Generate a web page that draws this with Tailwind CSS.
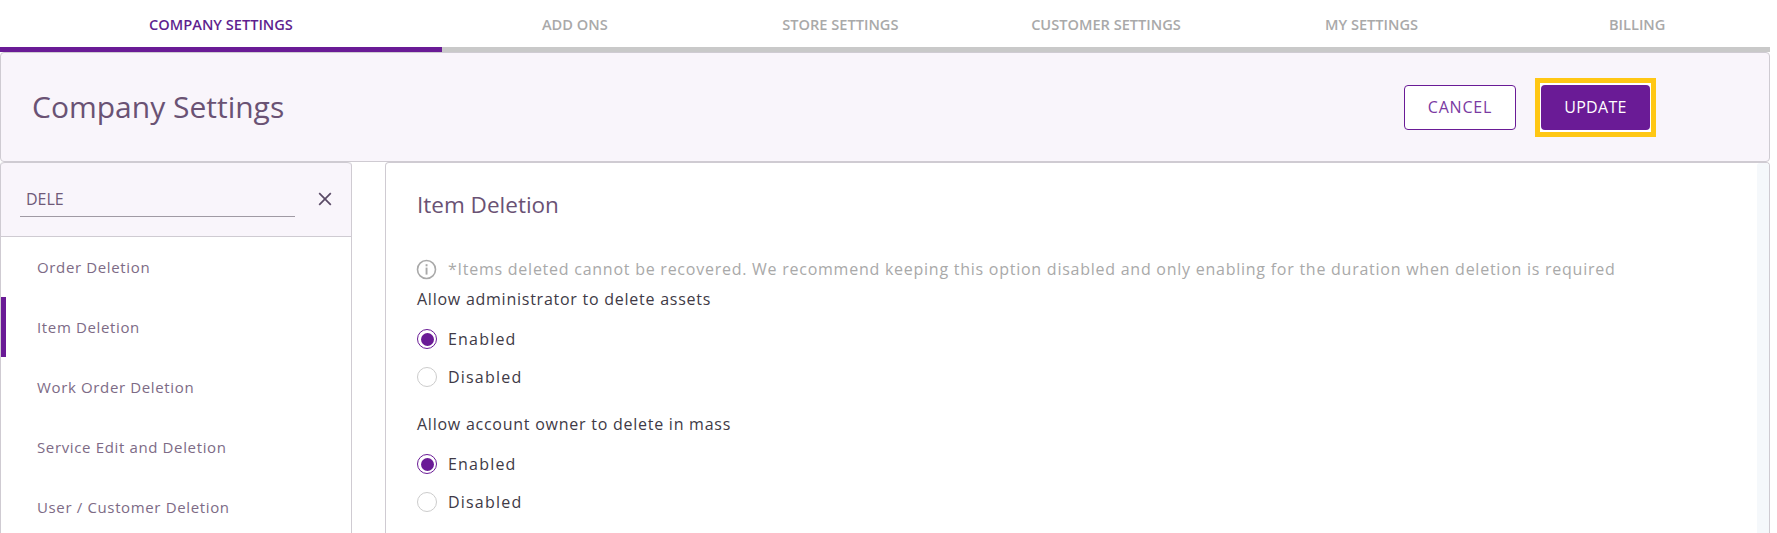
<!DOCTYPE html>
<html><head><meta charset="utf-8"><title>Company Settings</title>
<script src="https://cdn.jsdelivr.net/npm/@tailwindcss/browser@4"></script></head>
<body class="bg-white font-['Open_Sans',sans-serif] h-[533px] w-[1777px] overflow-hidden">
<div class="w-[1770px]">
  <nav class="flex h-[52px] text-[14.6px] font-semibold uppercase text-[#a9a9a9]">
    <div class="w-[442px] flex items-center justify-center pt-[3px] border-b-[5px] border-[#6a1b96] text-[#5f1f8f]">Company Settings</div>
    <div class="flex-1 flex items-center justify-center pt-[3px] border-b-[5px] border-[#c9c9c9]">Add Ons</div>
    <div class="flex-1 flex items-center justify-center pt-[3px] border-b-[5px] border-[#c9c9c9]">Store Settings</div>
    <div class="flex-1 flex items-center justify-center pt-[3px] border-b-[5px] border-[#c9c9c9]">Customer Settings</div>
    <div class="flex-1 flex items-center justify-center pt-[3px] border-b-[5px] border-[#c9c9c9]">My Settings</div>
    <div class="flex-1 flex items-center justify-center pt-[3px] border-b-[5px] border-[#c9c9c9]">Billing</div>
  </nav>
  <header class="h-[110px] flex items-center justify-between bg-[#f9f5fb] border border-[#cfcbd2] rounded-[4px] pl-[31px] pr-[113px]">
    <h1 class="text-[30px] font-normal text-[#6a5274] mt-[-1px]">Company Settings</h1>
    <div class="flex items-center gap-[19px]">
      <button class="w-[112px] h-[45px] bg-white border border-[#6a1b96] rounded-[4px] text-[16px] tracking-[0.8px] text-[#7a3aa2]">CANCEL</button>
      <div class="border-[5px] border-[#ffc714] bg-white px-[1px] py-[2px] flex">
        <button class="w-[109px] h-[45px] bg-[#6a1b96] rounded-[4px] text-[16px] tracking-[0.3px] text-white">UPDATE</button>
      </div>
    </div>
  </header>
  <div class="flex items-start h-[371px]">
    <aside class="w-[352px] h-full border-x border-[#cfcbd2] rounded-t-[4px]">
      <div class="h-[75px] bg-[#f9f5fb] border-y border-[#cfcbd2] rounded-t-[4px] flex items-start pl-[19px]">
        <div class="w-[275px] h-[54px] border-b border-[#a09aa4] flex items-center pl-[6px] pt-[19px] text-[16px] text-[#6f5a79]">DELE</div>
        <svg class="ml-[21px] mt-[27px]" width="18" height="18" viewBox="0 0 18 18"><path d="M3.2 3.2L14.8 14.8M14.8 3.2L3.2 14.8" stroke="#5a4a66" stroke-width="1.7" fill="none"/></svg>
      </div>
      <ul class="text-[15px] tracking-[0.64px] text-[#7d6b86]">
        <li class="h-[60px] flex items-center pl-[36px]">Order Deletion</li>
        <li class="h-[60px] flex items-center pl-[31px] border-l-[5px] border-[#6a1b96]">Item Deletion</li>
        <li class="h-[60px] flex items-center pl-[36px]">Work Order Deletion</li>
        <li class="h-[60px] flex items-center pl-[36px]">Service Edit and Deletion</li>
        <li class="h-[60px] flex items-center pl-[36px]">User / Customer Deletion</li>
      </ul>
    </aside>
    <main class="ml-[33px] flex-1 h-full border-x border-t border-[#cfcbd2] rounded-t-[4px] flex">
      <div class="flex-1 pl-[31px]">
        <h2 class="h-[84px] mb-[2px] flex items-center text-[22.5px] font-normal text-[#6a5274]">Item Deletion</h2>
        <p class="flex items-center gap-[11px] h-[40px] text-[16px] tracking-[0.75px] text-[#a9a9a9]">
          <svg class="ml-[-1px]" width="21" height="21" viewBox="0 0 21 21" fill="none"><circle cx="10.5" cy="10.5" r="9" stroke="#a9a9a9" stroke-width="1.6"/><rect x="9.6" y="5.2" width="1.9" height="2.1" fill="#a9a9a9"/><rect x="9.6" y="8.6" width="1.9" height="7" fill="#a9a9a9"/></svg>
          *Items deleted cannot be recovered. We recommend keeping this option disabled and only enabling for the duration when deletion is required</p>
        <div class="text-[16px] tracking-[0.75px] text-[#403a46]">
          <div class="h-[22px] flex items-center mt-[-1px]">Allow administrator to delete assets</div>
          <div class="h-[38px] mt-[10px] flex items-center gap-[11px] tracking-[1.2px]"><span class="w-[20px] h-[20px] rounded-full border-[1.5px] border-[#6a1b96] flex items-center justify-center"><span class="w-[13px] h-[13px] rounded-full bg-[#6a1b96]"></span></span>Enabled</div>
          <div class="h-[38px] flex items-center gap-[11px] tracking-[1.2px]"><span class="w-[20px] h-[20px] rounded-full border border-[#cccccc] bg-white"></span>Disabled</div>
          <div class="h-[22px] mt-[17px] flex items-center">Allow account owner to delete in mass</div>
          <div class="h-[38px] mt-[10px] flex items-center gap-[11px] tracking-[1.2px]"><span class="w-[20px] h-[20px] rounded-full border-[1.5px] border-[#6a1b96] flex items-center justify-center"><span class="w-[13px] h-[13px] rounded-full bg-[#6a1b96]"></span></span>Enabled</div>
          <div class="h-[38px] flex items-center gap-[11px] tracking-[1.2px]"><span class="w-[20px] h-[20px] rounded-full border border-[#cccccc] bg-white"></span>Disabled</div>
        </div>
      </div>
      <div class="w-[12px] h-full bg-[#f5f8fb] rounded-t-[3px]"></div>
    </main>
  </div>
</div>
</body></html>
